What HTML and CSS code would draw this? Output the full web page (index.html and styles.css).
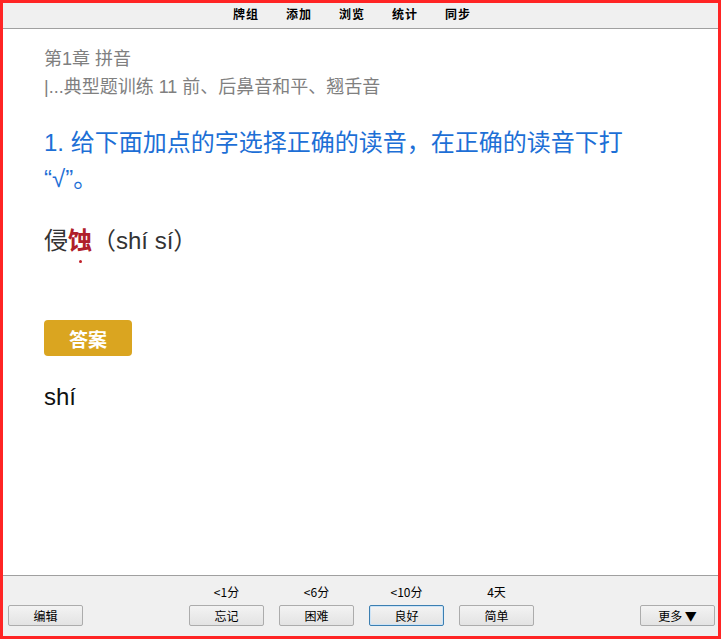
FILE: index.html
```html
<!DOCTYPE html>
<html lang="zh-CN">
<head>
<meta charset="utf-8">
<title>牌组</title>
<link rel="stylesheet" href="styles.css">
</head>
<body>
<div class="frame">
  <div class="topbar">
    <nav class="nav">
      <span class="nav-item">牌组</span>
      <span class="nav-item">添加</span>
      <span class="nav-item">浏览</span>
      <span class="nav-item">统计</span>
      <span class="nav-item">同步</span>
    </nav>
  </div>
  <main class="content">
    <div class="chapter">
      <div>第1章 拼音</div>
      <div>|...典型题训练 11 前、后鼻音和平、翘舌音</div>
    </div>
    <div class="question">1. 给下面加点的字选择正确的读音，在正确的读音下打“√”。</div>
    <div class="word">侵<span class="dotted">蚀</span>（shí sí）</div>
    <div class="answer-btn">答案</div>
    <div class="answer">shí</div>
  </main>
  <div class="bottombar">
    <div class="left"><button class="btn">编辑</button></div>
    <div class="center">
      <div class="choice"><span class="due">&lt;1分</span><button class="btn">忘记</button></div>
      <div class="choice"><span class="due">&lt;6分</span><button class="btn">困难</button></div>
      <div class="choice"><span class="due">&lt;10分</span><button class="btn focus">良好</button></div>
      <div class="choice"><span class="due">4天</span><button class="btn">简单</button></div>
    </div>
    <div class="right"><button class="btn">更多 ▼</button></div>
  </div>
</div>
</body>
</html>
```
FILE: styles.css
```css
html, body {
  margin: 0;
  padding: 0;
  background: #ffffff;
}
body {
  font-family: "Liberation Sans", "Noto Sans CJK SC", sans-serif;
}
.frame {
  width: 715px;
  height: 633px;
  border: 3px solid #ff2424;
  display: flex;
  flex-direction: column;
  background: #ffffff;
}
.topbar {
  height: 25px;
  flex: none;
  background: #f0f0f0;
  border-bottom: 1px solid #a0a0a0;
  display: flex;
  justify-content: center;
  align-items: center;
}
.nav {
  display: flex;
  gap: 27px;
  padding-right: 17px;
  padding-bottom: 3px;
}
.nav-item {
  font-family: "Noto Sans CJK SC", sans-serif;
  font-size: 12px;
  font-weight: bold;
  color: #000;
  line-height: 14px;
  letter-spacing: 1px;
}
.content {
  flex: 1;
  padding: 16px 30px 0 41px;
}
.chapter {
  font-size: 18px;
  line-height: 28px;
  color: #808080;
}
.question {
  margin-top: 24px;
  font-size: 24px;
  line-height: 36px;
  color: #1d6fd6;
  max-width: 620px;
}
.word {
  margin-top: 26px;
  font-size: 24px;
  line-height: 36px;
  color: #333333;
}
.dotted {
  display: inline-block;
  position: relative;
  color: #b0202a;
  font-weight: bold;
}
.dotted::after {
  content: "";
  position: absolute;
  left: 50%;
  top: calc(100% + 1px);
  width: 3px;
  height: 3px;
  margin-left: -1px;
  border-radius: 50%;
  background: #c0202a;
}
.answer-btn {
  margin-top: 61px;
  width: 88px;
  height: 36px;
  border-radius: 4px;
  background: #daa520;
  color: #ffffff;
  font-size: 19px;
  font-weight: bold;
  display: flex;
  align-items: center;
  justify-content: center;
}
.answer {
  margin-top: 23px;
  font-size: 24px;
  line-height: 36px;
  color: #111111;
}
.bottombar {
  flex: none;
  background: #f0f0f0;
  border-top: 1px solid #a0a0a0;
  display: grid;
  grid-template-columns: 1fr auto 1fr;
  align-items: end;
  padding: 0 3px 10px 5px;
  box-sizing: border-box;
  height: 61px;
}
.left {
  justify-self: start;
}
.right {
  justify-self: end;
}
.center {
  display: flex;
  gap: 15px;
}
.choice {
  display: flex;
  flex-direction: column;
  align-items: center;
  gap: 6px;
}
.due {
  font-family: "Noto Sans CJK SC", sans-serif;
  font-size: 12px;
  line-height: 14px;
  color: #000;
}
.btn {
  width: 75px;
  height: 21px;
  margin: 0;
  padding: 0;
  border: 1px solid #acacac;
  border-radius: 2px;
  background: linear-gradient(#f3f3f3, #e3e3e3);
  font-family: "Noto Sans CJK SC", sans-serif;
  font-size: 12px;
  line-height: 19px;
  color: #000;
  display: block;
}
.btn.focus {
  border-color: #3c7fb1;
  box-shadow: inset 0 0 0 1px #cde4f7;
}
```
